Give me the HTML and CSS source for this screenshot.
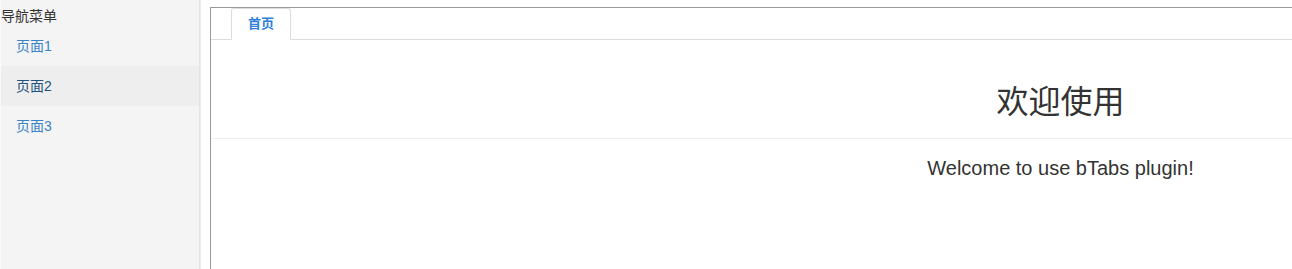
FILE: index.html
```html
<!DOCTYPE html>
<html lang="zh-CN">
<head>
<meta charset="utf-8">
<title>bTabs</title>
<link rel="stylesheet" href="styles.css">
</head>
<body>
<div class="layout">
  <aside class="sidebar">
    <div class="sidebar-title">导航菜单</div>
    <ul class="menu">
      <li class="menu-item"><a href="#">页面1</a></li>
      <li class="menu-item active"><a href="#">页面2</a></li>
      <li class="menu-item"><a href="#">页面3</a></li>
    </ul>
  </aside>
  <main class="main">
    <div class="frame">
      <div class="tabbar">
        <div class="tab active">首页</div>
      </div>
      <div class="tab-content">
        <h1 class="page-header">欢迎使用</h1>
        <p class="lead">Welcome to use bTabs plugin!</p>
      </div>
    </div>
  </main>
</div>
</body>
</html>
```

FILE: styles.css
```css
html, body {
  margin: 0;
  padding: 0;
  overflow: hidden;
  height: 269px;
  background: #fff;
  font-family: "Liberation Sans", Arial, "Noto Sans CJK SC", sans-serif;
  font-size: 14px;
  color: #333;
}

.layout {
  display: flex;
  width: 1292px;
  height: 269px;
  overflow: hidden;
}

.sidebar {
  flex: 0 0 198px;
  background: #f4f4f4;
  border-left: 1px solid #fafafa;
  border-right: 1px solid #e3e3e3;
  box-shadow: 1px 0 1px #eeeeee;
}

.sidebar-title {
  padding: 6px 0 0 0;
  line-height: 20px;
  font-size: 14px;
  color: #333;
}

.menu {
  list-style: none;
  margin: 0;
  padding: 0;
}

.menu-item a {
  display: block;
  padding: 10px 15px;
  line-height: 20px;
  font-size: 14px;
  color: #3a83c4;
  text-decoration: none;
}

.menu-item.active a {
  background: #eeeeee;
  color: #23527c;
}

.main {
  flex: 1 1 auto;
  min-width: 0;
  overflow: hidden;
  padding: 7px 0 0 10px;
}

.frame {
  width: 1700px;
  height: 262px;
  border-top: 1px solid #999;
  border-left: 1px solid #999;
  box-sizing: border-box;
}

.tabbar {
  display: flex;
  padding-left: 20px;
  border-bottom: 1px solid #dddddd;
  height: 31px;
}

.tab {
  padding: 0 16px;
  line-height: 30px;
  font-size: 13px;
  font-weight: bold;
  color: #2f7fd8;
  background: #fff;
  border: 1px solid #dddddd;
  border-bottom-color: #fff;
  border-radius: 3px 3px 0 0;
  margin-bottom: -1px;
}

.tab-content {
  text-align: center;
}

.page-header {
  margin: 0;
  padding: 40px 0 14px;
  font-size: 32px;
  font-weight: normal;
  line-height: 44px;
  color: #333;
  border-bottom: 1px solid #eeeeee;
}

.lead {
  margin: 0;
  padding-top: 15px;
  font-size: 20px;
  line-height: 28px;
  color: #333;
}
```
